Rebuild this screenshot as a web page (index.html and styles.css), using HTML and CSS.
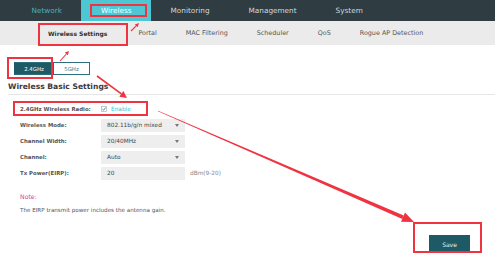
FILE: index.html
```html
<!DOCTYPE html>
<html>
<head>
<meta charset="utf-8">
<link rel="stylesheet" href="styles.css">
</head>
<body>
<div class="page">
  <nav class="topnav">
    <a class="tn tn-first">Network</a>
    <a class="tn active">Wireless</a>
    <a class="tn">Monitoring</a>
    <a class="tn">Management</a>
    <a class="tn">System</a>
  </nav>
  <nav class="subnav">
    <a class="sn active">Wireless Settings</a>
    <a class="sn">Portal</a>
    <a class="sn">MAC Filtering</a>
    <a class="sn">Scheduler</a>
    <a class="sn">QoS</a>
    <a class="sn">Rogue AP Detection</a>
  </nav>
  <main class="content">
    <div class="bands">
      <span class="band on">2.4GHz</span>
      <span class="band">5GHz</span>
    </div>
    <h2 class="sect">Wireless Basic Settings</h2>
    <div class="form">
      <div class="row">
        <span class="lbl">2.4GHz Wireless Radio:</span>
        <span class="chk"><svg width="6" height="6" viewBox="0 0 6 6"><rect x="0.5" y="0.5" width="5" height="5" fill="#fff" stroke="#9aa" stroke-width="0.6"/><path d="M1.4 3 L2.6 4.2 L4.7 1.6" fill="none" stroke="#2a7f8c" stroke-width="0.9"/></svg></span>
        <span class="en">Enable</span>
      </div>
      <div class="row">
        <span class="lbl">Wireless Mode:</span>
        <div class="sel"><span>802.11b/g/n mixed</span><span class="caret"></span></div>
      </div>
      <div class="row">
        <span class="lbl">Channel Width:</span>
        <div class="sel"><span>20/40MHz</span><span class="caret"></span></div>
      </div>
      <div class="row">
        <span class="lbl">Channel:</span>
        <div class="sel"><span>Auto</span><span class="caret"></span></div>
      </div>
      <div class="row">
        <span class="lbl">Tx Power(EIRP):</span>
        <div class="sel"><span>20</span></div>
        <span class="unit">dBm(9-20)</span>
      </div>
    </div>
    <div class="note">
      <p class="note-h">Note:</p>
      <p class="note-t">The EIRP transmit power includes the antenna gain.</p>
    </div>
    <div class="actions"><button class="save">Save</button></div>
  </main>
  <svg class="annot" width="495" height="253" viewBox="0 0 495 253">
    <g fill="none" stroke="#ef3340" stroke-width="2">
      <rect x="91" y="5" width="55" height="11"/>
      <rect x="39" y="24" width="88" height="21"/>
      <rect x="8" y="58" width="44" height="20"/>
      <rect x="14" y="102" width="133" height="13"/>
      <rect x="414" y="223" width="67" height="29"/>
    </g>
    <g stroke="#ef3340" stroke-width="1.1">
      <line x1="131" y1="31" x2="136.2" y2="25.8"/>
      <line x1="60" y1="61" x2="66.3" y2="54"/>
      <line x1="97" y1="76" x2="121.4" y2="93.9" stroke-width="1.6"/>
    </g>
    <g fill="#ef3340">
      <polygon points="139,23 137.6,27.2 134.8,24.4"/>
      <polygon points="69,51 67.8,55.3 64.8,52.6"/>
      <polygon points="127,98 119.3,96.7 123.4,91.0"/>
      <polygon points="157.9,111.3 402.3,218.9 403.7,215.6 158.1,110.7"/>
      <polygon points="414,222 401.0,221.8 405.0,212.6"/>
    </g>
  </svg>
</div>
</body>
</html>
```
FILE: styles.css
```css
html, body {
  margin: 0;
  padding: 0;
  overflow: hidden;
  background: #fff;
}
body {
  font-family: "DejaVu Sans", Verdana, sans-serif;
  color: #444;
}
.page {
  position: relative;
  width: 495px;
  height: 253px;
  overflow: hidden;
}
.topnav {
  display: flex;
  height: 21px;
  background: #2f3c42;
  padding-left: 12px;
}
.tn {
  display: flex;
  align-items: center;
  padding: 0 19.5px;
  font-size: 7.3px;
  color: #d4d8d9;
}
.tn-first { color: #4fb0b8; }
.tn.active {
  background: #4cc7d3;
  color: #fff;
}
.subnav {
  display: flex;
  align-items: center;
  height: 24px;
  background: #ebebeb;
  padding-left: 48px;
  gap: 29px;
}
.sn {
  font-size: 6.4px;
  color: #555;
}
.sn.active {
  font-weight: bold;
  color: #333;
  font-size: 6px;
  margin-right: 2px;
}
.content {
  padding-left: 8px;
}
.bands {
  display: flex;
  margin: 17px 0 0 6px;
}
.band {
  width: 40px;
  height: 13px;
  box-sizing: border-box;
  display: flex;
  align-items: center;
  justify-content: center;
  font-size: 5.4px;
  color: #2a8894;
  border: 1px solid #2a6f7b;
  border-left: none;
}
.band.on {
  background: #1e5a66;
  color: #fff;
  border-left: 1px solid #1e5a66;
}
.band + .band {
  width: 36px;
}
.sect {
  margin: 7px 0 0 0;
  padding-bottom: 2px;
  font-size: 7.6px;
  line-height: 10px;
  font-weight: bold;
  color: #3a3a3a;
  border-bottom: 1px solid #e6e6e6;
}
.form {
  margin-top: 6px;
  padding-left: 12px;
}
.row {
  display: flex;
  align-items: center;
  height: 16px;
}
.lbl {
  width: 81px;
  flex: none;
  font-size: 5.4px;
  font-weight: bold;
  color: #555;
}
.chk {
  display: flex;
  width: 10px;
}
.en {
  font-size: 5.8px;
  color: #3cc3d2;
}
.sel {
  position: relative;
  width: 84px;
  height: 13px;
  box-sizing: border-box;
  background: #eeeeee;
  display: flex;
  align-items: center;
  padding-left: 6px;
  font-size: 5.8px;
  color: #444;
}
.caret {
  position: absolute;
  right: 6px;
  top: 5px;
  width: 0;
  height: 0;
  border-left: 2px solid transparent;
  border-right: 2px solid transparent;
  border-top: 3px solid #777;
}
.unit {
  margin-left: 5px;
  font-size: 5.8px;
  color: #888;
}
.note {
  margin-top: 11px;
  padding-left: 12px;
}
.note p {
  margin: 0;
  line-height: 10px;
}
.note-h {
  font-size: 6.2px;
  color: #e0448d;
}
.note-t {
  margin-top: 3px !important;
  font-size: 5.6px;
  color: #555;
}
.actions {
  display: flex;
  justify-content: flex-end;
  margin-top: 20px;
  padding-right: 25px;
}
.save {
  width: 41px;
  height: 19px;
  border: none;
  background: #1e5a66;
  color: #e8f2f3;
  font-family: "DejaVu Sans", Verdana, sans-serif;
  font-size: 6px;
  padding: 0;
}
.annot {
  position: absolute;
  left: 0;
  top: 0;
  pointer-events: none;
}
```
